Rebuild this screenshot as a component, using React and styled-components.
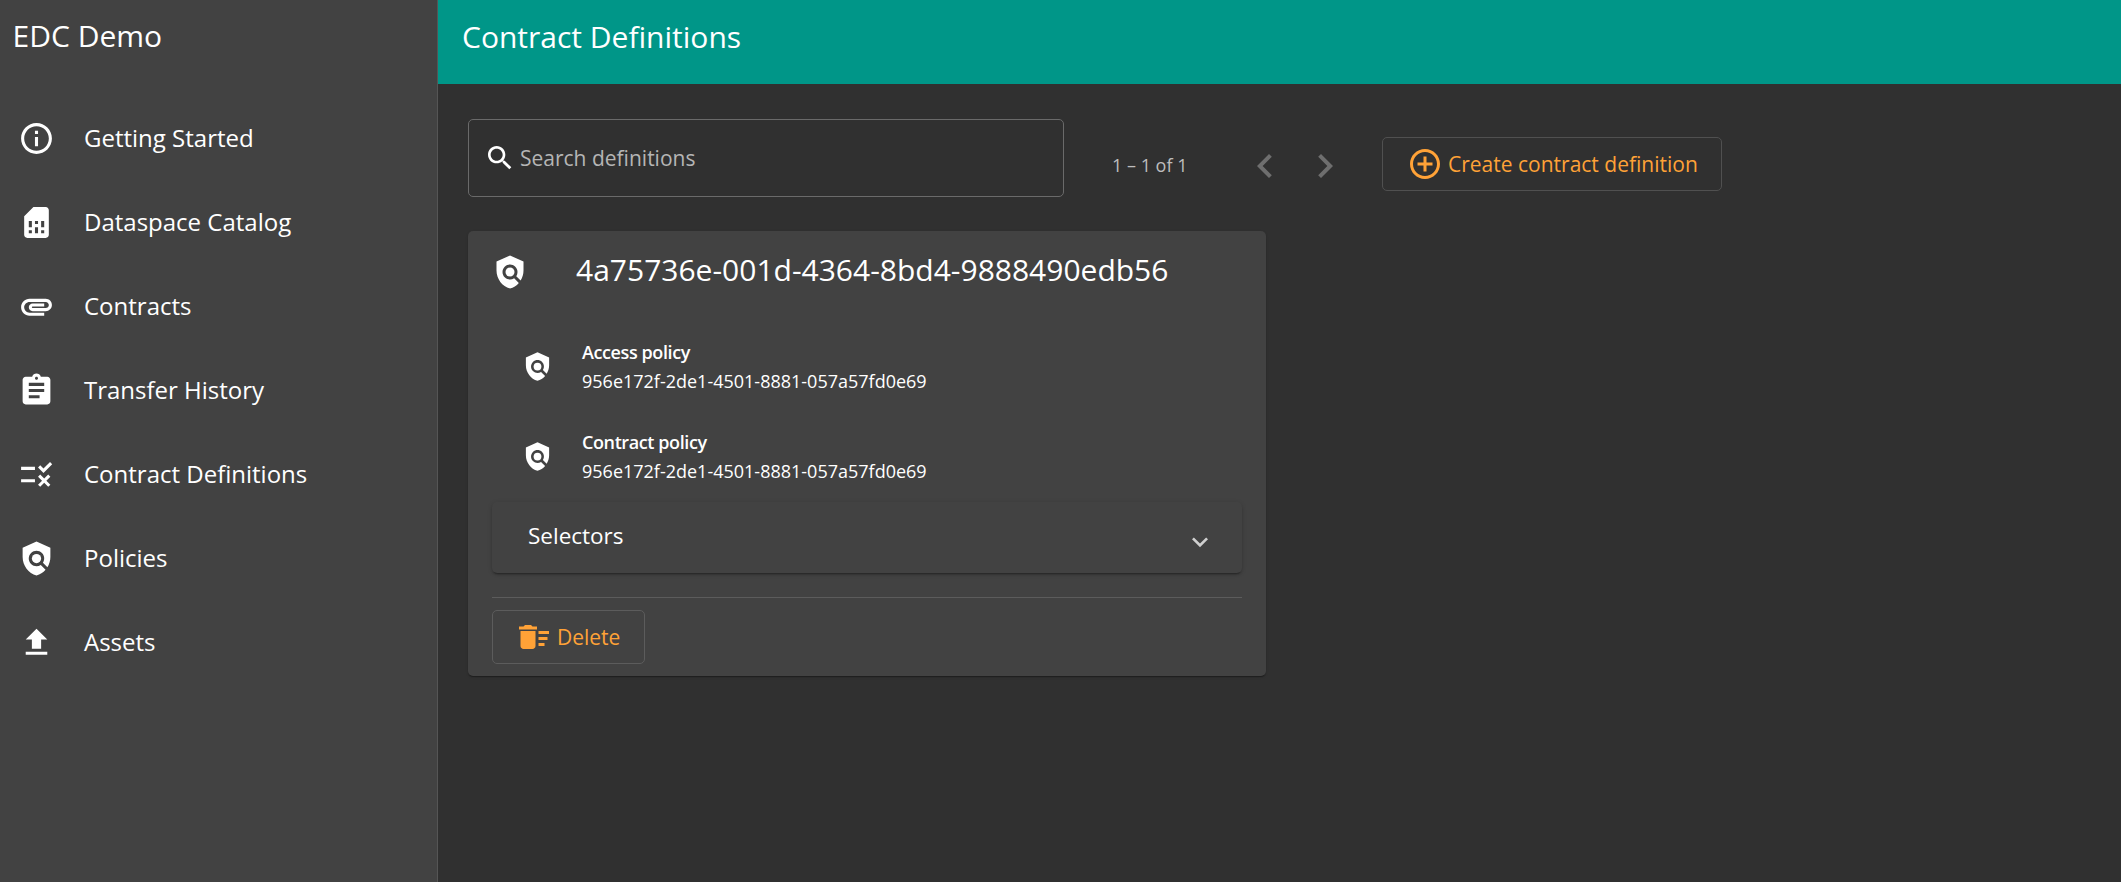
import React from "react";
import styled, { createGlobalStyle } from "styled-components";

const Global = createGlobalStyle`
  html, body { margin: 0; padding: 0; height: 100%; background: #303030; }
  body { font-family: "Open Sans", "Noto Sans", sans-serif; color: #fff; }
  #root { height: 100%; }
  * { box-sizing: border-box; }
`;

const Shell = styled.div`
  display: flex;
  width: 2121px;
  height: 882px;
  overflow: hidden;
`;
const Sidebar = styled.aside`
  width: 438px;
  flex: none;
  background: #424242;
  border-right: 1px solid #555;
`;
const Brand = styled.div`
  height: 84px;
  padding: 0 12.5px 14px;
  display: flex;
  align-items: center;
  font-size: 30px;
`;
const Nav = styled.nav`
  padding-top: 12px;
  display: flex;
  flex-direction: column;
`;
const NavItem = styled.a`
  height: 84px;
  padding-left: 18px;
  display: flex;
  align-items: center;
  gap: 29px;
  font-size: 24px;
  color: #fff;
`;
const NavLabel = styled.span`
  margin-top: -2px;
`;
const Main = styled.main`
  flex: 1;
  display: flex;
  flex-direction: column;
`;
const Header = styled.header`
  height: 84px;
  background: #009688;
  padding: 0 0 12px 24px;
  display: flex;
  align-items: center;
  font-size: 30px;
`;
const Content = styled.div`
  padding: 35px 30px;
`;
const Toolbar = styled.div`
  display: flex;
  align-items: center;
  height: 78px;
`;
const SearchBox = styled.div`
  width: 596px;
  height: 78px;
  border: 1px solid #6a6a6a;
  border-radius: 5px;
  display: flex;
  align-items: center;
  padding: 0 0 0 15px;
  gap: 4px;
  font-size: 21px;
  color: #b5b5b5;
  svg { color: #fff; }
`;
const Pager = styled.div`
  display: flex;
  align-items: center;
  margin: 16px 0 0 48px;
`;
const Range = styled.div`
  width: 123px;
  margin-top: -2px;
  font-size: 18px;
  color: #bdbdbd;
`;
const PageButton = styled.div`
  width: 60px;
  display: flex;
  justify-content: center;
  color: #6e6e6e;
`;
const OutlineButton = styled.button`
  display: inline-flex;
  align-items: center;
  height: 54px;
  padding: 0 0 0 24px;
  gap: 4px;
  background: transparent;
  border: 1px solid #505050;
  border-radius: 5px;
  color: #ffa237;
  font: 400 21px "Open Sans", "Noto Sans", sans-serif;
`;
const CreateButton = styled(OutlineButton)`
  width: 340px;
  margin: 11px 0 0 27px;
  gap: 5px;
`;
const Card = styled.section`
  margin-top: 34px;
  width: 798px;
  height: 445px;
  background: #424242;
  border-radius: 5px;
  box-shadow: 0 2px 1px -1px rgba(0,0,0,.2), 0 1px 1px rgba(0,0,0,.14), 0 1px 3px rgba(0,0,0,.12);
  padding: 0 24px;
`;
const CardHead = styled.div`
  height: 91px;
  padding-bottom: 9px;
  display: flex;
  align-items: center;
  gap: 48px;
  font-size: 30px;
`;
const CardTitle = styled.span`
  margin-top: -6px;
`;
const PolicyRow = styled.div`
  height: 90px;
  display: flex;
  align-items: center;
  padding-left: 30px;
  gap: 29px;
  svg { margin-top: -2px; }
`;
const RowText = styled.div`
  display: flex;
  flex-direction: column;
  gap: 5px;
  margin-top: -2px;
  font-size: 18px;
  line-height: 24px;
`;
const RowTitle = styled.div`
  font-weight: 600;
  letter-spacing: -0.4px;
`;
const Accordion = styled.div`
  height: 71px;
  border-radius: 5px;
  box-shadow: 0 3px 1px -2px rgba(0,0,0,.2), 0 2px 2px rgba(0,0,0,.14), 0 1px 5px rgba(0,0,0,.12);
  display: flex;
  align-items: center;
  justify-content: space-between;
  padding: 0 26px 0 36px;
  font-size: 22.5px;
`;
const AccordionLabel = styled.span`
  margin-top: -5px;
`;
const Chevron = styled.div`
  display: flex;
  margin-top: 8px;
  color: #d0d0d0;
`;
const Divider = styled.div`
  margin-top: 24px;
  height: 1px;
  background: #5c5c5c;
`;
const DeleteButton = styled(OutlineButton)`
  margin-top: 12px;
  width: 153px;
  padding-left: 23px;
  gap: 5px;
  border-color: #5c5c5c;
`;

const Icon = ({ size = 37, children }) => (
  <svg width={size} height={size} viewBox="0 0 24 24" fill="currentColor" style={{ flex: "none" }}>
    {children}
  </svg>
);
const Policy = ({ size }) => (
  <Icon size={size}>
    <path d="M21,5l-9-4L3,5v6c0,5.55,3.84,10.74,9,12c2.3-0.56,4.33-1.9,5.88-3.71l-3.12-3.12c-1.94,1.29-4.58,1.07-6.29-0.64 c-1.95-1.95-1.95-5.12,0-7.07c1.95-1.95,5.12-1.95,7.07,0c1.71,1.71,1.92,4.35,0.64,6.29l2.9,2.9C20.29,15.69,21,13.38,21,11V5z" />
    <circle cx="12" cy="12" r="3" />
  </Icon>
);

const nav = [
  ["Getting Started", <path d="M11 7h2v2h-2zm0 4h2v6h-2zm1-9C6.48 2 2 6.48 2 12s4.48 10 10 10 10-4.48 10-10S17.52 2 12 2zm0 18c-4.41 0-8-3.59-8-8s3.59-8 8-8 8 3.59 8 8-3.59 8-8 8z" />],
  ["Dataspace Catalog", <path d="M19.99 4c0-1.1-.89-2-1.99-2h-8L4 8v12c0 1.1.9 2 2 2h12c1.1 0 2-.9 2-2l-.01-16zM9 19H7v-2h2v2zm8 0h-2v-2h2v2zm-8-4H7v-4h2v4zm4 4h-2v-4h2v4zm0-6h-2v-2h2v2zm4 2h-2v-4h2v4z" />],
  ["Contracts", <path d="M2 12.5C2 9.46 4.46 7 7.5 7H18c2.21 0 4 1.79 4 4s-1.79 4-4 4H9.5C8.12 15 7 13.88 7 12.5S8.12 10 9.5 10H17v2H9.41c-.55 0-.55 1 0 1H18c1.1 0 2-.9 2-2s-.9-2-2-2H7.5C5.57 9 4 10.57 4 12.5S5.57 16 7.5 16H17v2H7.5C4.46 18 2 15.54 2 12.5z" />],
  ["Transfer History", <path d="M19 3h-4.18C14.4 1.84 13.3 1 12 1c-1.3 0-2.4.84-2.82 2H5c-1.1 0-2 .9-2 2v14c0 1.1.9 2 2 2h14c1.1 0 2-.9 2-2V5c0-1.1-.9-2-2-2zm-7 0c.55 0 1 .45 1 1s-.45 1-1 1-1-.45-1-1 .45-1 1-1zm2 14H7v-2h7v2zm3-4H7v-2h10v2zm0-4H7V7h10v2z" />],
  ["Contract Definitions", <path d="M16.54 11 13 7.46l1.41-1.41 2.12 2.12 4.24-4.24 1.41 1.41L16.54 11zM11 7H2v2h9V7zm10 6.41L19.59 12 17 14.59 14.41 12 13 13.41 15.59 16 13 18.59 14.41 20 17 17.41 19.59 20 21 18.59 18.41 16 21 13.41zM11 15H2v2h9v-2z" />],
  ["Policies", null],
  ["Assets", <path d="M9 16h6v-6h4l-7-7-7 7h4zm-4 2h14v2H5z" />],
];

export default function App() {
  return (
    <>
      <Global />
      <Shell>
        <Sidebar>
          <Brand>EDC Demo</Brand>
          <Nav>
            {nav.map(([label, path]) => (
              <NavItem key={label}>
                {path ? <Icon>{path}</Icon> : <Policy />}
                <NavLabel>{label}</NavLabel>
              </NavItem>
            ))}
          </Nav>
        </Sidebar>
        <Main>
          <Header>Contract Definitions</Header>
          <Content>
            <Toolbar>
              <SearchBox>
                <Icon size={32}>
                  <path d="M15.5 14h-.79l-.28-.27C15.41 12.59 16 11.11 16 9.5 16 5.91 13.09 3 9.5 3S3 5.91 3 9.5 5.91 16 9.5 16c1.61 0 3.09-.59 4.23-1.57l.27.28v.79l5 4.99L20.49 19l-4.99-5zm-6 0C7.01 14 5 11.99 5 9.5S7.01 5 9.5 5 14 7.01 14 9.5 11.99 14 9.5 14z" />
                </Icon>
                Search definitions
              </SearchBox>
              <Pager>
                <Range>1 – 1 of 1</Range>
                <PageButton>
                  <Icon size={48}><path d="M15.41 7.41 14 6l-6 6 6 6 1.41-1.41L10.83 12z" /></Icon>
                </PageButton>
                <PageButton>
                  <Icon size={48}><path d="M10 6 8.59 7.41 13.17 12l-4.58 4.59L10 18l6-6z" /></Icon>
                </PageButton>
              </Pager>
              <CreateButton>
                <Icon size={36}><path d="M13 7h-2v4H7v2h4v4h2v-4h4v-2h-4V7zm-1-5C6.48 2 2 6.48 2 12s4.48 10 10 10 10-4.48 10-10S17.52 2 12 2zm0 18c-4.41 0-8-3.59-8-8s3.59-8 8-8 8 3.59 8 8-3.59 8-8 8z" /></Icon>
                Create contract definition
              </CreateButton>
            </Toolbar>
            <Card>
              <CardHead>
                <Policy size={36} />
                <CardTitle>4a75736e-001d-4364-8bd4-9888490edb56</CardTitle>
              </CardHead>
              <PolicyRow>
                <Policy size={31} />
                <RowText>
                  <RowTitle>Access policy</RowTitle>
                  <span>956e172f-2de1-4501-8881-057a57fd0e69</span>
                </RowText>
              </PolicyRow>
              <PolicyRow>
                <Policy size={31} />
                <RowText>
                  <RowTitle>Contract policy</RowTitle>
                  <span>956e172f-2de1-4501-8881-057a57fd0e69</span>
                </RowText>
              </PolicyRow>
              <Accordion>
                <AccordionLabel>Selectors</AccordionLabel>
                <Chevron>
                  <Icon size={32}><path d="M16.59 8.59 12 13.17 7.41 8.59 6 10l6 6 6-6z" /></Icon>
                </Chevron>
              </Accordion>
              <Divider />
              <DeleteButton>
                <Icon size={36}><path d="M15 16h4v2h-4zm0-8h7v2h-7zm0 4h6v2h-6zM3 18c0 1.1.9 2 2 2h6c1.1 0 2-.9 2-2V8H3v10zM14 5h-3l-1-1H6L5 5H2v2h12z" /></Icon>
                Delete
              </DeleteButton>
            </Card>
          </Content>
        </Main>
      </Shell>
    </>
  );
}
